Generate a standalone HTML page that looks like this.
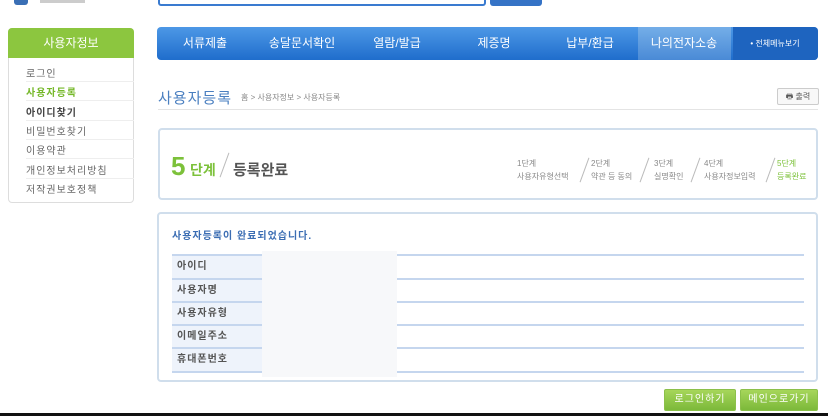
<!DOCTYPE html>
<html><head><meta charset="utf-8"><style>
*{margin:0;padding:0;box-sizing:border-box}
body{width:828px;height:416px;background:#fff;position:relative;overflow:hidden;font-family:"Liberation Sans","Noto Sans CJK KR",sans-serif;color:#555}
.a{position:absolute}
.nav span{position:absolute;top:0;height:33px;line-height:33px;color:#fff;font-size:12px;text-align:center;transform:translateX(-50%);white-space:nowrap}
.side div{position:absolute;left:26px;font-size:10px;color:#666;letter-spacing:1px}
.sl{position:absolute;left:18px;width:108px;height:1px;background:#eee}
.row{position:absolute;left:172px;width:632px;height:2px;background:#c5d6ee}
.lab{position:absolute;left:172px;width:90px;height:22px;background:#eef3fb;font-size:10px;font-weight:bold;color:#555;padding-left:5px;line-height:22px;letter-spacing:1px}
.st{position:absolute;font-size:8px;color:#888;line-height:13px}
.sl2{position:absolute;width:1px;height:26px;background:#bbb;transform:rotate(20deg)}
.btn{position:absolute;top:389px;height:22px;background:linear-gradient(#a6d65a,#7cb93a);border:1px solid #8cc04a;border-radius:2px;color:#fff;font-size:10px;text-align:center;line-height:20px;letter-spacing:1px}
</style></head><body>
<div class="a" style="left:14px;top:0;width:14px;height:5px;background:#3a6fb5;border-radius:0 0 3px 3px"></div>
<div class="a" style="left:40px;top:0;width:45px;height:3px;background:#999;opacity:.5"></div>
<div class="a" style="left:158px;top:-3px;width:328px;height:9px;border:2px solid #3a7bd0;border-radius:3px"></div>
<div class="a" style="left:490px;top:-3px;width:52px;height:9px;background:#3573c6;border-radius:3px"></div>

<div class="a" style="left:8px;top:28px;width:126px;height:175px;border:1px solid #ddd;border-radius:4px"></div>
<div class="a" style="left:8px;top:28px;width:126px;height:30px;background:#8cc63f;border-radius:4px 4px 0 0;color:#fff;font-size:12px;text-align:center;line-height:30px">사용자정보</div>
<div class="side">
<div style="top:65px">로그인</div><div class="sl" style="top:81px"></div>
<div style="top:84px;color:#76b82a;font-weight:bold">사용자등록</div><div class="sl" style="top:100px"></div>
<div style="top:104px;color:#444;font-weight:bold">아이디찾기</div><div class="sl" style="top:120px"></div>
<div style="top:123px">비밀번호찾기</div><div class="sl" style="top:139px"></div>
<div style="top:142px">이용약관</div><div class="sl" style="top:158px"></div>
<div style="top:162px">개인정보처리방침</div><div class="sl" style="top:178px"></div>
<div style="top:181px">저작권보호정책</div>
</div>

<div class="a nav" style="left:157px;top:27px;width:661px;height:33px;background:linear-gradient(#4d98e6,#1f6dcc);border-radius:4px;overflow:hidden">
<div class="a" style="left:481px;top:0;width:93px;height:33px;background:linear-gradient(#74aee8,#4a8ad6)"></div>
<div class="a" style="left:576px;top:0;width:85px;height:33px;background:#1e64bf"></div>
<span style="left:48px">서류제출</span><span style="left:145px">송달문서확인</span><span style="left:240px">열람/발급</span><span style="left:337px">제증명</span><span style="left:433px">납부/환급</span><span style="left:527px">나의전자소송</span><span style="left:618px;font-size:8px">• 전체메뉴보기</span>
</div>

<div class="a" style="left:158px;top:87px;font-size:15px;color:#4a7fc0;letter-spacing:1px">사용자등록</div>
<div class="a" style="left:241px;top:92px;font-size:8px;color:#888">홈 &gt; 사용자정보 &gt; 사용자등록</div>
<div class="a" style="left:777px;top:88px;width:42px;height:17px;border:1px solid #ccc;border-radius:2px;font-size:8px;line-height:15px;text-align:center;color:#555;background:#f8f8f8">🖶 출력</div>
<div class="a" style="left:158px;top:109px;width:660px;height:1px;background:#e4e4e4"></div>

<div class="a" style="left:158px;top:128px;width:660px;height:72px;border:2px solid #d0deec;border-radius:4px"></div>
<div class="a" style="left:171px;top:151px;font-size:26px;color:#7cc13a;font-weight:bold">5</div>
<div class="a" style="left:190px;top:160px;font-size:14px;color:#7cc13a;font-weight:bold">단계</div>
<div class="sl2" style="left:224px;top:152px"></div>
<div class="a" style="left:233px;top:159px;font-size:15px;color:#555;font-weight:bold">등록완료</div>
<div class="st" style="left:517px;top:157px">1단계<br>사용자유형선택</div>
<div class="sl2" style="left:584px;top:157px"></div>
<div class="st" style="left:591px;top:157px">2단계<br>약관 등 동의</div>
<div class="sl2" style="left:644px;top:157px"></div>
<div class="st" style="left:654px;top:157px">3단계<br>실명확인</div>
<div class="sl2" style="left:695px;top:157px"></div>
<div class="st" style="left:704px;top:157px">4단계<br>사용자정보입력</div>
<div class="sl2" style="left:770px;top:157px"></div>
<div class="st" style="left:777px;top:157px;color:#7cc13a">5단계<br>등록완료</div>

<div class="a" style="left:157px;top:212px;width:661px;height:170px;border:2px solid #d0deec;border-radius:4px"></div>
<div class="a" style="left:172px;top:227px;font-size:10px;color:#3b6db3;font-weight:bold;letter-spacing:1px">사용자등록이 완료되었습니다.</div>
<div class="lab" style="top:256px">아이디</div>
<div class="lab" style="top:280px">사용자명</div>
<div class="lab" style="top:303px">사용자유형</div>
<div class="lab" style="top:326px">이메일주소</div>
<div class="lab" style="top:349px">휴대폰번호</div>
<div class="row" style="top:254px"></div><div class="row" style="top:278px"></div><div class="row" style="top:301px"></div><div class="row" style="top:324px"></div><div class="row" style="top:347px"></div><div class="row" style="top:371px"></div>
<div class="a" style="left:262px;top:251px;width:135px;height:126px;background:#f7f8fa"></div>

<div class="btn" style="left:664px;width:72px">로그인하기</div>
<div class="btn" style="left:740px;width:78px">메인으로가기</div>
<div class="a" style="left:0;top:413px;width:828px;height:3px;background:#111"></div>
</body></html>
